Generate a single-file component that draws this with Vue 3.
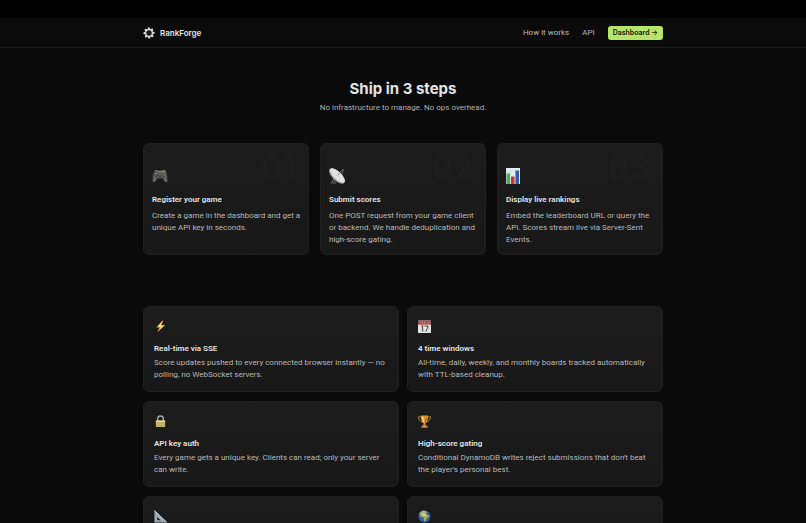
<template>
  <div class="page">
    <div class="top-strip"></div>
    <header class="header">
      <div class="container header-inner">
        <a class="brand" href="#">
          <svg class="brand-icon" viewBox="0 0 24 24" aria-hidden="true">
            <g fill="#e2e2e2">
              <path v-for="n in 8" :key="n" d="M8.6 6.4 L10 0.8 L13 1 L15.4 6.4 Z" :transform="`rotate(${n * 45} 12 12)`" />
            </g>
            <circle cx="12" cy="12" r="6.6" fill="#141414" stroke="#e2e2e2" stroke-width="2" />
            <path d="M12 12 L12 7 M12 12 L7.8 14.4 M12 12 L16.2 14.4" stroke="#3c3c3c" stroke-width="1.2" />
          </svg>
          <span>RankForge</span>
        </a>
        <nav class="nav">
          <a class="nav-link" href="#how">How it works</a>
          <a class="nav-link" href="#api">API</a>
          <a class="nav-button" href="#dashboard">Dashboard →</a>
        </nav>
      </div>
    </header>

    <main class="container">
      <section id="how" class="intro">
        <h1>Ship in 3 steps</h1>
        <p>No infrastructure to manage. No ops overhead.</p>
      </section>

      <section class="steps">
        <article v-for="step in steps" :key="step.number" class="step">
          <span class="step-number">{{ step.number }}</span>
          <svg v-if="step.icon === 'gamepad'" class="step-icon" viewBox="0 0 32 32" aria-hidden="true">
            <path d="M6 5 Q9 2 12 5 L20 5 Q23 2 27 5 Q30 8 31 25 Q31 29 28 29 Q25 28 21 21 L11 21 Q7 28 4 29 Q1 29 1 25 Q2 8 6 5 Z" fill="#62605c" />
            <path d="M6 6 Q16 9 26 6" fill="none" stroke="#85827c" stroke-width="2" />
            <circle cx="8" cy="11" r="4" fill="#34332f" />
            <path d="M8 8v6M5 11h6" stroke="#96938b" stroke-width="1.6" />
            <circle cx="12" cy="18" r="3.6" fill="#2b2a28" />
            <circle cx="20" cy="18" r="3.6" fill="#2b2a28" />
            <circle cx="12" cy="18" r="1.8" fill="#77746d" />
            <circle cx="20" cy="18" r="1.8" fill="#77746d" />
            <circle cx="24" cy="7.4" r="1.5" fill="#a39654" />
            <circle cx="27" cy="10.6" r="1.6" fill="#a44d32" />
            <circle cx="21" cy="10.6" r="1.5" fill="#4c6074" />
            <circle cx="24" cy="13.6" r="1.5" fill="#577449" />
          </svg>
          <svg v-else-if="step.icon === 'satellite'" class="step-icon" viewBox="0 0 32 32" aria-hidden="true">
            <path d="M10 20 L12 30 M10 20 L6 29 M4 30h11" stroke="#596065" stroke-width="2.4" />
            <path d="M14 14 L28 4 M25 17 L28 4" stroke="#62696d" stroke-width="1.6" />
            <circle cx="28" cy="4" r="2.2" fill="#555c61" />
            <ellipse cx="16" cy="16" rx="20" ry="9" transform="rotate(44 16 16)" fill="#a4a8ab" />
            <ellipse cx="17" cy="15" rx="19" ry="7.5" transform="rotate(44 17 15)" fill="#dfe0e1" />
            <path d="M17 15 L25 7" stroke="#6c7174" stroke-width="1.4" />
          </svg>
          <svg v-else class="step-icon" viewBox="0 0 32 32" aria-hidden="true">
            <rect x="0" y="0" width="28" height="32" fill="#e3edf4" />
            <path d="M0 8h28M0 16h28M0 24h28M9 0v32M19 0v32" stroke="#bdd0de" stroke-width="0.8" />
            <rect x="1" y="11" width="7" height="21" fill="#54aa4b" />
            <rect x="10" y="17" width="7" height="15" fill="#bf3a31" />
            <rect x="19" y="5" width="7" height="27" fill="#315bb0" />
          </svg>
          <h2 class="card-title">{{ step.title }}</h2>
          <p class="card-text">{{ step.text }}</p>
        </article>
      </section>

      <section class="features">
        <article v-for="feature in features" :key="feature.icon" class="feature">
          <svg class="feature-icon" viewBox="0 0 28 28" aria-hidden="true">
            <g v-if="feature.icon === 'bolt'">
              <path d="M18 1 L5 16 L12 16 L7 27 L24 11 L16 11 L20 2 Z" fill="#e8a340" />
              <path d="M17 3 L8 15 L15 14 L11 22 L21 12 L14 12 Z" fill="#ffdc78" />
            </g>
            <g v-else-if="feature.icon === 'calendar'">
              <rect x="0" y="1" width="28" height="27" rx="1" fill="#e4e2e1" />
              <rect x="0" y="1" width="28" height="9" rx="1" fill="#a95451" />
              <path d="M5 5h3M10 4v4M14 4v4M17 4v4h3M23 4v4" stroke="#dda8a4" stroke-width="1.2" />
              <path d="M7 14 L10 12 V25 M14 13 H22 L17 25" fill="none" stroke="#393939" stroke-width="2" />
            </g>
            <g v-else-if="feature.icon === 'lock'">
              <path d="M8 14 V8 Q8 2 14 2 Q20 2 20 8 V14" fill="none" stroke="#a5aaad" stroke-width="3" />
              <rect x="4" y="12" width="20" height="14" rx="1" fill="#c2b76c" />
              <rect x="4" y="12" width="20" height="3" fill="#e3d892" />
              <path d="M5 19h18M5 23h18" stroke="#aaa05a" stroke-width="1" />
            </g>
            <g v-else-if="feature.icon === 'trophy'">
              <path d="M7 4 H1 Q1 13 10 15 M21 4 H27 Q27 13 18 15" fill="none" stroke="#cb8c2c" stroke-width="2" />
              <path d="M6 1 H22 Q22 14 16 18 V22 H12 V18 Q6 14 6 1 Z" fill="#d99a32" />
              <path d="M10 3 Q10 12 13 16" fill="none" stroke="#ffe293" stroke-width="2.4" />
              <path d="M18 4 Q18 11 15 16" fill="none" stroke="#96601e" stroke-width="2" />
              <path d="M10 21 H18 L21 25 V28 H7 V25 Z" fill="#b6602f" />
              <rect x="11" y="23" width="6" height="2" fill="#edbd68" />
            </g>
            <g v-else-if="feature.icon === 'ruler'">
              <path fill-rule="evenodd" d="M1 1 L28 27 H1 Z M7 15 V22 H14 Z" fill="#9cabb9" />
              <path d="M1 1 L28 27" stroke="#dce5eb" stroke-width="2" />
              <path d="M2 6v20M5 25h19" stroke="#768593" stroke-width="1.5" stroke-dasharray="1 2" />
            </g>
            <g v-else>
              <circle cx="14" cy="14" r="13" fill="#315ba4" />
              <path d="M5 5 Q10 0 17 2 L20 6 L16 8 L22 11 L24 14 L19 17 L17 23 L14 25 L12 20 L13 16 L6 15 L4 10 Z" fill="#a4b469" />
              <path d="M8 8 L14 7 L18 12 L12 13 Z" fill="#ddd29a" />
              <path d="M3 8 Q6 2 13 2" fill="none" stroke="#91b5dd" stroke-width="2" />
            </g>
          </svg>
          <template v-if="feature.title">
            <h2 class="card-title">{{ feature.title }}</h2>
            <p class="card-text">{{ feature.text }}</p>
          </template>
        </article>
      </section>
    </main>
  </div>
</template>

<script setup>
const steps = [
  {
    number: '01',
    icon: 'gamepad',
    title: 'Register your game',
    text: 'Create a game in the dashboard and get a unique API key in seconds.'
  },
  {
    number: '02',
    icon: 'satellite',
    title: 'Submit scores',
    text: 'One POST request from your game client or backend. We handle deduplication and high-score gating.'
  },
  {
    number: '03',
    icon: 'chart',
    title: 'Display live rankings',
    text: 'Embed the leaderboard URL or query the API. Scores stream live via Server-Sent Events.'
  }
]

const features = [
  {
    icon: 'bolt',
    title: 'Real-time via SSE',
    text: 'Score updates pushed to every connected browser instantly — no polling, no WebSocket servers.'
  },
  {
    icon: 'calendar',
    title: '4 time windows',
    text: 'All-time, daily, weekly, and monthly boards tracked automatically with TTL-based cleanup.'
  },
  {
    icon: 'lock',
    title: 'API key auth',
    text: 'Every game gets a unique key. Clients can read; only your server can write.'
  },
  {
    icon: 'trophy',
    title: 'High-score gating',
    text: "Conditional DynamoDB writes reject submissions that don't beat the player's personal best."
  },
  { icon: 'ruler' },
  { icon: 'globe' }
]
</script>

<style>
body {
  margin: 0;
  background: #0a0a0a;
}
</style>

<style scoped>
.page {
  height: 100vh;
  overflow: hidden;
  background: #0a0a0a;
  color: #e4e4e4;
  font-family: Roboto, 'Liberation Sans', sans-serif;
  font-size: 8px;
}

.top-strip {
  height: 18px;
  background: #000;
}

.container {
  max-width: 520px;
  margin: 0 auto;
}

.header {
  background: #0b0b0b;
  border-bottom: 1px solid #1a1a1a;
}

.header-inner {
  display: flex;
  align-items: center;
  justify-content: space-between;
  height: 29px;
}

.brand {
  display: flex;
  align-items: center;
  gap: 5px;
  color: #e4e4e4;
  font-family: Inter, sans-serif;
  font-weight: 600;
  text-decoration: none;
}

.brand-icon {
  width: 12px;
  height: 12px;
}

.nav {
  display: flex;
  align-items: center;
  gap: 13px;
}

.nav-link {
  color: #b8b8b8;
  text-decoration: none;
}

.nav-button {
  padding: 0 5px;
  border-radius: 3px;
  background: #b7e56b;
  color: #14180c;
  font-family: Inter, sans-serif;
  font-size: 7px;
  font-weight: 600;
  line-height: 14px;
  text-decoration: none;
}

.intro {
  padding: 31px 0 30px;
  text-align: center;
}

.intro h1 {
  margin: 0 0 4px;
  font-family: Inter, sans-serif;
  font-size: 15px;
  font-weight: 700;
  line-height: 20px;
}

.intro p {
  margin: 0;
  color: #b0b0b0;
  line-height: 10px;
}

.steps {
  display: grid;
  grid-template-columns: repeat(3, 1fr);
  gap: 11px;
}

.step,
.feature {
  border: 1px solid #1f1f1f;
  border-radius: 6px;
  background: linear-gradient(180deg, #1c1c1c 0%, #181818 100%);
}

.step {
  position: relative;
  padding: 24px 5px 8px 8px;
}

.step-number {
  position: absolute;
  top: 8px;
  right: 12px;
  color: #1e1e1e;
  font-family: Inter, sans-serif;
  font-size: 32px;
  font-weight: 600;
  line-height: 32px;
}

.step-icon {
  display: block;
  width: 16px;
  height: 16px;
  margin-bottom: 11px;
}

.card-title {
  margin: 0;
  color: #e4e4e4;
  font-size: 8px;
  font-weight: 600;
  line-height: 10px;
}

.card-text {
  margin: 0;
  color: #b8b8b8;
  line-height: 12px;
}

.step .card-title {
  margin-bottom: 5px;
}

.features {
  display: grid;
  grid-template-columns: repeat(2, 1fr);
  gap: 9px 8px;
  margin-top: 51px;
}

.feature {
  padding: 13px 10px 10px;
}

.feature-icon {
  display: block;
  width: 13px;
  height: 13px;
  margin-bottom: 11px;
}

.feature .card-title {
  margin-bottom: 3px;
}
</style>
